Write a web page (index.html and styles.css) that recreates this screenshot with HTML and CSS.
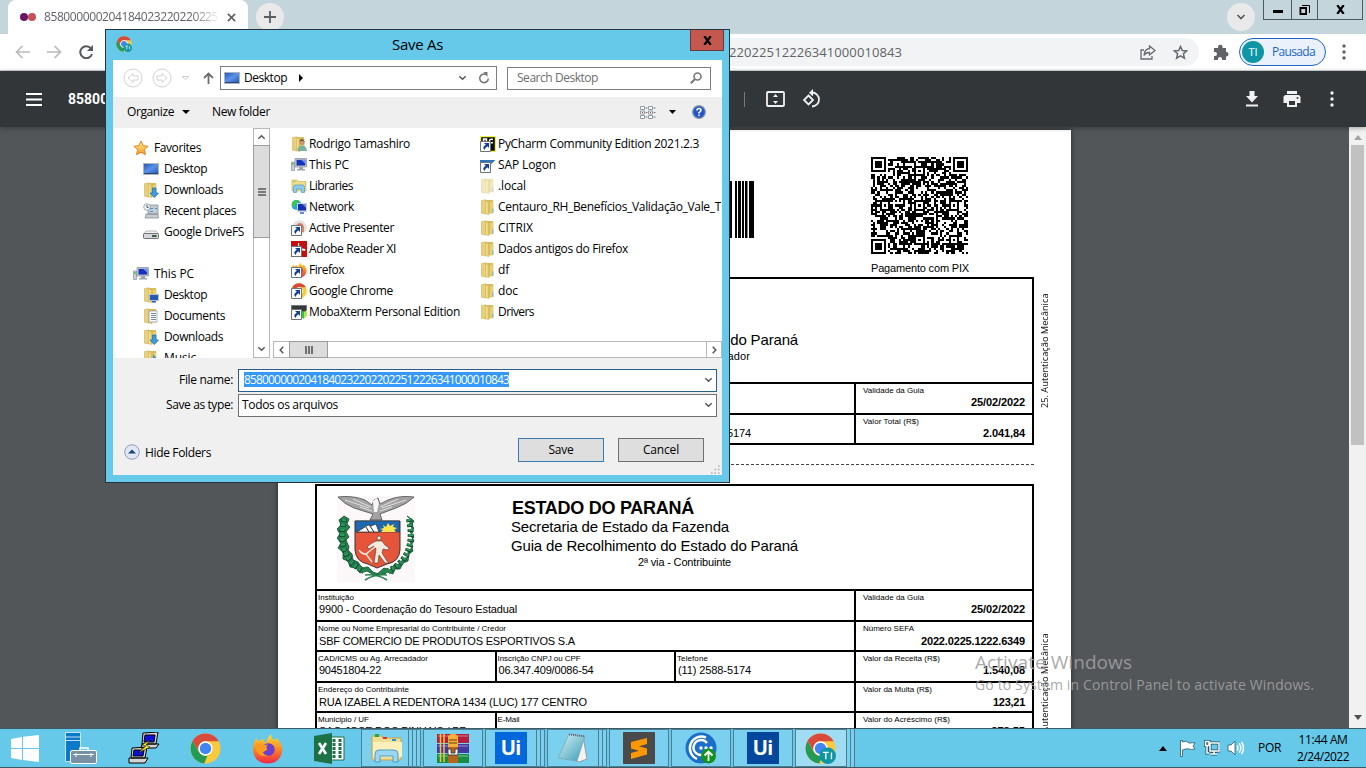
FILE: index.html
```html
<!DOCTYPE html>
<html lang="en">
<head>
<meta charset="utf-8">
<title>Save As</title>
<link rel="stylesheet" href="styles.css">
</head>
<body>
<svg class="defs" aria-hidden="true">
  <defs>
    <linearGradient id="gBlue" x1="0" y1="0" x2="1" y2="1"><stop offset="0" stop-color="#2558b4"/><stop offset=".5" stop-color="#5c93e8"/><stop offset="1" stop-color="#2a5cb8"/></linearGradient>
    <linearGradient id="gFold" x1="0" x2="1"><stop offset="0" stop-color="#f4e4a0"/><stop offset=".5" stop-color="#e2c662"/><stop offset="1" stop-color="#f2dc8a"/></linearGradient>
    <linearGradient id="gStar" x1="0" y1="0" x2="0" y2="1"><stop offset="0" stop-color="#fff0a0"/><stop offset="1" stop-color="#f79a1e"/></linearGradient>
    <linearGradient id="gFire" x1="0" y1="0" x2="0" y2="1"><stop offset="0" stop-color="#ffe03a"/><stop offset=".5" stop-color="#ff8a1e"/><stop offset="1" stop-color="#f0264f"/></linearGradient>
    <linearGradient id="gPad" x1="0" y1="0" x2="1" y2="1"><stop offset="0" stop-color="#d8f4f6"/><stop offset="1" stop-color="#3a9cb8"/></linearGradient>
    <symbol id="screen" viewBox="0 0 16 14"><path fill="#aab7c4" d="M0 1h16v12H0z"/><path fill="url(#gBlue)" d="M1 2h14v9H1z"/><path fill="#27436e" d="M1 11h14v1H1z"/></symbol>
    <symbol id="folder" viewBox="0 0 16 16"><path fill="#e9d07c" stroke="#cdb05a" stroke-width=".6" d="M1.500 1.500 6 .8V15l-4.500-.8z"/><path fill="#d9bd5c" d="M6 1h7v12H6z"/><path fill="url(#gFold)" stroke="#cfb355" stroke-width=".6" d="M5.500 2.500 9 2v13.500l-3.500-.8zM9 2.500h4V14H9z"/><path fill="#5fb2e6" d="M12.300 9.500h1v4h-1z"/></symbol>
    <symbol id="dl" viewBox="0 0 16 16"><use href="#folder"/><path fill="#39a0e0" stroke="#1b6fb0" stroke-width=".7" d="M9.500 6h3.500v5h2.500l-4.200 4.600L7 11h2.500z"/></symbol>
    <symbol id="deskf" viewBox="0 0 16 16"><use href="#folder"/><path fill="#b7c2cc" d="M6 7h10v7H6z"/><path fill="#245bb8" d="M7 8h8v5H7zM9 14h4v1.500H9z"/></symbol>
    <symbol id="docs" viewBox="0 0 16 16"><use href="#folder"/><path fill="#fff" stroke="#8a949e" stroke-width=".7" d="M6 3h8v11H6z"/><path stroke="#6d86a8" d="M8 5.500h5M8 7.500h5M8 9.500h5M8 11.500h5"/></symbol>
    <symbol id="music" viewBox="0 0 16 16"><use href="#folder"/><path fill="#3b93d4" d="M10 4l4 5v3l-3-4v6a2 2 0 1 1-1-2z"/></symbol>
    <symbol id="star" viewBox="0 0 16 16"><path fill="url(#gStar)" stroke="#df8420" d="M8 1l2.100 4.700 5 .5-3.700 3.500 1 5L8 12.200l-4.400 2.500 1-5L.9 6.200l5-.5z"/></symbol>
    <symbol id="recent" viewBox="0 0 16 16"><path fill="#c4ccd2" stroke="#87919a" stroke-width=".8" d="M5 2h10v9H5zM3 11h12l.5 4H2z"/><path stroke="#4f8dc4" d="M7 5.500h3M7 8.500h3M12 5.500h2"/><circle cx="4" cy="4" r="3.300" fill="#eef4f8" stroke="#8b99a4" stroke-width=".8"/><path d="M4 2v2.500h1.500" fill="none" stroke="#456"/></symbol>
    <symbol id="drive" viewBox="0 0 16 16"><path fill="#f1f3f4" stroke="#9aa0a5" stroke-width=".7" d="M3 7h10l2.500 3H.5z"/><rect x=".5" y="9.500" width="15" height="5" rx="1" fill="#d3d7d9" stroke="#6d7377"/><path fill="#4a4f52" d="M9 11h4v2H9z"/><path fill="#37c43b" d="M13 11h1v2h-1z"/></symbol>
    <symbol id="pc" viewBox="0 0 16 16"><path fill="#c9ced2" stroke="#7d858b" stroke-width=".6" d="M.5 5h3v8.500h-3z"/><path fill="#3dc843" d="M1 6h1.500v2H1z"/><path fill="#cdd3d8" stroke="#858c93" stroke-width=".7" d="M4 1.500h11.500v8.500H4z"/><path fill="#1732b8" d="M5.500 2.800h8.800v5.800H5.500z"/><path fill="#7090f0" d="M10 2.800h4.300v4z"/><path fill="#9ca4aa" d="M8 10h4v2h2v1.500H6V12h2z"/></symbol>
    <symbol id="user" viewBox="0 0 16 16"><use href="#folder"/><circle cx="11" cy="6.300" r="2.700" fill="#c8956a"/><path fill="#54402d" d="M8.300 5.500q2.700-5 5.300 0l-2.500-1z"/><path fill="#7bb29a" d="M6.500 15q0-5.500 4.500-5.500t5 5.500z"/></symbol>
    <symbol id="libs" viewBox="0 0 16 16"><path fill="#f1dc8c" stroke="#cfb252" stroke-width=".7" d="M1 2h5l1 1.500h8V13H1z"/><path fill="#8ed86b" d="M2 3h3v1H2z"/><path fill="#8bcdf0" stroke="#4d9bc9" stroke-width=".7" d="M2.500 14.500V9q0-2 2-2h7q2 0 2 2v5.500h-3V11h-5v3.500z"/></symbol>
    <symbol id="net" viewBox="0 0 16 16"><circle cx="5.500" cy="6" r="5" fill="#2aa6e0"/><path fill="#3cc84a" d="M2 2q4-2 6 0L5 5 2 9q-2-4 0-7z"/><path fill="#cdd4e0" d="M6 4h10v9H6z"/><path fill="#1230b0" d="M7 5h8v6.500H7z"/><path fill="#6f86e0" d="M11 5h4v4zM9 13h4v2H9z"/></symbol>
    <symbol id="cut" viewBox="0 0 16 16"><path fill="#fff" stroke="#6b737b" d="M.5 5.500h10v10H.5z"/><path fill="#143f96" d="M4 7h5v5L7.300 10.300Q5 12 4.500 14 1.500 11 5.800 8.800z"/></symbol>
    <symbol id="chrome" viewBox="0 0 32 32"><circle cx="16" cy="16" r="15.500" fill="#fbc93c"/><path fill="#d9493c" d="M2.600 8.300A15.500 15.500 0 0 1 29.600 8.500H16A7.500 7.500 0 0 0 9 13.500L8.500 18z"/><path fill="#249a57" d="M2.600 8.300 9.500 20q3 4.500 8.500 3.300L14.700 31.400A15.500 15.500 0 0 1 2.600 8.300z"/><circle cx="16" cy="16" r="7.400" fill="#fff"/><circle cx="16" cy="16" r="5.900" fill="#4285f4"/></symbol>
    <symbol id="ti" viewBox="0 0 32 32"><use href="#chrome"/><circle cx="23.500" cy="23.500" r="8.500" fill="#0e96a5"/><path fill="none" stroke="#fff" stroke-width="1.400" d="M18.500 20h6M21.500 20v7M27.300 20v7"/></symbol>
    <symbol id="firefox" viewBox="0 0 32 32"><path fill="url(#gFire)" d="M20 1q-1 4 2.500 6.500 2.500-.8 2.500-2.500Q32 12 31 19 29 31 16 31.500 2.500 31 1 18 .5 11 4.500 5q.5 2.500 2.500 3.500 2.500-2.500 5-2 0 3 3 4.500Q15 4 20 1z"/><circle cx="17" cy="17" r="6.500" fill="#6b3fd0"/><path fill="#ff9c20" d="M4.500 9q5 5.500 12 2.500-3 3-.5 5.500l-5 3q2 3.500 6 3-9 3-12.500-5z"/></symbol>
    <symbol id="ap" viewBox="0 0 16 16"><circle cx="8.500" cy="7.500" r="7.200" fill="#e3e2e0"/><path fill="none" stroke="#df785c" stroke-width="1.800" d="M5 12q0-8 4-8t3 8"/><use href="#cut"/></symbol>
    <symbol id="adobe" viewBox="0 0 16 16"><path fill="#c40e10" d="M0 0h16v16H0z"/><path fill="none" stroke="#fff" stroke-width="1.200" d="M8 2q-1.500 2 1 5t5 2q-1-2-7 0"/><use href="#cut"/></symbol>
    <symbol id="ffs" viewBox="0 0 16 16"><use href="#firefox"/><use href="#cut"/></symbol>
    <symbol id="chs" viewBox="0 0 16 16"><use href="#chrome"/><use href="#cut"/></symbol>
    <symbol id="moba" viewBox="0 0 16 16"><path fill="#35393c" stroke="#777" d="M.5 1.500h15v9H.5z"/><path fill="#2fca32" d="M11 7l4 1-2 7-3-2z"/><path fill="#b8e060" d="M13 8l3-2v6l-3 2z"/><use href="#cut"/></symbol>
    <symbol id="pyc" viewBox="0 0 16 16"><path fill="#0b0b0b" stroke="#eaf04c" stroke-width="1.200" d="M.6.600h14.800v14.800H.6z"/><path fill="none" stroke="#fff" stroke-width="1.500" d="M3.500 8V3h3v2.500h-3M13 3.500q-3.500-1-3.500 1.500T13 6.500"/><use href="#cut"/></symbol>
    <symbol id="sap" viewBox="0 0 16 16"><path fill="#2f75b8" d="M0 3h15.500L7 11H0z"/><use href="#cut"/></symbol>
    <symbol id="down" viewBox="0 0 10 6"><path fill="none" stroke="#555" stroke-width="1.600" d="M1.500 1 5 4.500 8.500 1"/></symbol>
    <symbol id="dots" viewBox="0 0 4 16"><circle cx="2" cy="2" r="1.700"/><circle cx="2" cy="8" r="1.700"/><circle cx="2" cy="14" r="1.700"/></symbol>
  </defs>
</svg>

<div class="desktop">
  <section class="browser">
    <div class="tabstrip">
      <div class="tab">
        <svg class="fav" viewBox="0 0 16 8"><circle cx="4" cy="4" r="4" fill="#6c1560"/><circle cx="12" cy="4" r="4" fill="#c94f58"/></svg>
        <span class="tab-title"><span data-w="174">8580000002041840232202202 25</span></span>
        <svg class="tab-x" viewBox="0 0 10 10"><path d="M1 1l8 8M9 1 1 9" stroke="#5a5e62" stroke-width="1.700"/></svg>
      </div>
      <div class="round plus"><svg width="12" height="12"><path d="M6 0v12M0 6h12" stroke="#5a5e62" stroke-width="1.800"/></svg></div>
      <div class="round chev"><svg width="10" height="6"><use href="#down"/></svg></div>
      <div class="winbtns">
        <span><svg width="10" height="3"><path d="M0 0h10v3H0z"/></svg></span>
        <span><svg width="11" height="10" viewBox="0 0 11 10"><path fill="none" stroke="#000" d="M3 .5h7.500V8"/><path fill="none" stroke="#000" stroke-width="1.800" d="M1.400 3h5.700v6H1.400z"/></svg></span>
        <span><svg width="9" height="9" viewBox="0 0 9 9"><path d="M1.300 0 7.700 9M7.700 0 1.300 9" stroke="#000" stroke-width="2.200"/></svg></span>
      </div>
    </div>
    <div class="navbar">
      <svg class="nav" width="15" height="14" viewBox="0 0 15 14"><path fill="none" stroke="#b9bbbd" stroke-width="1.700" d="M15 7H1.500M7.500 1 1.500 7l6 6"/></svg>
      <svg class="nav" width="15" height="14" viewBox="0 0 15 14"><path fill="none" stroke="#b9bbbd" stroke-width="1.700" d="M0 7h13.500M7.500 1l6 6-6 6"/></svg>
      <svg class="nav" width="15" height="14" viewBox="0 0 15 14"><path fill="none" stroke="#55595d" stroke-width="2" d="M12 3.500A6 6 0 1 0 13 9"/><path fill="#55595d" d="M14 0v6H8z"/></svg>
      <div class="urlbar">
        <span class="url" data-w="173">220225122263410000 10843</span>
        <svg class="share" width="16" height="15" viewBox="0 0 16 15"><path fill="none" stroke="#65696d" stroke-width="1.300" d="M4 5H1v9h11v-3M9.500 1 15 5.500 9.500 10V7.500Q5.500 7.500 4 10.500 4.500 4 9.500 3.500z"/></svg>
        <svg width="15" height="15" viewBox="0 0 15 15"><path fill="none" stroke="#65696d" stroke-width="1.500" d="M7.500 1.500l1.800 4 4.400.4-3.300 2.900 1 4.300-3.900-2.300-3.900 2.300 1-4.300L1.300 5.900l4.400-.4z"/></svg>
      </div>
      <svg class="puzzle" width="16" height="16" viewBox="0 0 16 16"><path fill="#5f6368" d="M1 4h4V3a2.300 2.300 0 0 1 4.600 0v1H13v4h.7a2.300 2.300 0 0 1 0 4.500H13V16H9v-1a2 2 0 0 0-4 0v1H1v-4h1a2 2 0 0 0 0-4H1z"/></svg>
      <div class="pill"><b>TI</b><span data-w="43">Pausada</span></div>
      <svg class="more" width="4" height="16" fill="#5f6368"><use href="#dots"/></svg>
    </div>
    <div class="pdfbar">
      <svg class="burger" width="16" height="13"><path d="M0 1h16M0 6.500h16M0 12h16" stroke="#fff" stroke-width="2"/></svg>
      <strong class="pdf-title">858000000204</strong>
      <i class="sep"></i>
      <svg class="fit" width="19" height="16" viewBox="0 0 19 16"><rect x="1" y="1" width="17" height="14" rx="1" fill="none" stroke="#f1f1f1" stroke-width="1.800"/><path fill="#f1f1f1" d="M9.500 3l2.500 3H7zM9.500 13 7 10h5z"/></svg>
      <svg class="rot" width="19" height="20" viewBox="0 0 19 20"><path fill="none" stroke="#f1f1f1" stroke-width="1.800" d="M6.500 6.500 11 11l-4.500 4.500L2 11zM10 3.500a7 7 0 0 1 0 14"/><path fill="#f1f1f1" d="M11 0v7.500L7 3.700z"/></svg>
      <span class="grow"></span>
      <svg width="14" height="16" viewBox="0 0 14 16"><path fill="#f1f1f1" d="M4.500 0h5v5H13l-6 6.500L1 5h3.500zM1 13.500h12v2H1z"/></svg>
      <svg class="print" width="18" height="16" viewBox="0 0 18 16"><path fill="#f1f1f1" fill-rule="evenodd" d="M4 0h10v3H4zM3 4h12q2.500 0 2.500 2.500V12H14v4H4v-4H.5V6.500Q.5 4 3 4zm3 6v4h6v-4z"/><circle cx="14.500" cy="7" r="1" fill="#323639"/></svg>
      <svg width="4" height="16" fill="#f1f1f1"><use href="#dots"/></svg>
    </div>
    <div class="viewer">
      <div class="canvas">
        <article class="page">
          <div class="codes">
            <svg class="bars" width="26" height="57"><path d="M0 0h4v57H0zM7 0h2v57H7zM10 0h3v57h-3zM14 0h2v57h-2zM17 0h2.500v57H17zM21 0h5v57h-5z"/></svg>
            <div class="pix"><svg id="qr" width="97" height="97" viewBox="0 0 45 45" shape-rendering="crispEdges"><path/></svg><span data-w="98">Pagamento com PIX</span></div>
          </div>
          <div class="slip">
            <div class="form first">
              <div class="head"><div class="crest"></div><div class="headings"><h1 data-w="182">ESTADO DO PARANÁ</h1><p data-w="218">Secretaria de Estado da Fazenda</p><p data-w="287">Guia de Recolhimento do Estado do Paraná</p><small data-w="100">1ª via - Arrecadador</small></div></div>
              <div class="row"><div class="cell wide"></div><div class="cell right"><label data-w="61">Validade da Guia</label><b data-w="54">25/02/2022</b></div></div>
              <div class="row"><div class="cell"></div><div class="cell"></div><div class="cell"><label>Telefone</label><em data-w="73">(11) 2588-5174</em></div><div class="cell right"><label data-w="56">Valor Total (R$)</label><b data-w="42">2.041,84</b></div></div>
            </div>
            <div class="side">25. Autenticação Mecânica</div>
          </div>
          <div class="cutline"></div>
          <div class="slip">
            <div class="form">
              <div class="head">
                <svg class="crest" width="78" height="86" viewBox="0 0 78 86">
                  <path fill="#fcf8f9" d="M0 0h78v86H0z"/>
                  <g fill="#278552" stroke="#114829" stroke-width=".8"><path d="M7 20l5 3-2 5 3 3-4 5 3 5-3 3 3 7-1 3 4 4 1 6 5 2 4 6 6-1 5 5 5 2-4 1-7-4-7 2-4-5-6-1-2-6-5-2 0-7-5-4 3-5-4-5 3-4-3-5 4-4-2-5z"/><path d="M70 20l5 4-3 4 5 4-4 4 4 5-4 5 3 5-5 4v6l-5 2-3 5-6 1-4 5-6-2-8 7 9-1 2-2 6 2 2-5 5 0 3-6 5-2 1-7 4-3-2-6 3-4-3-5 2-5-2-5 3-5z"/></g>
                  <path fill="none" stroke="#114829" stroke-dasharray="3 2" stroke-width="6" d="M7 23Q-1 62 27 75M72 23Q80 62 51 75"/>
                  <path fill="none" stroke="#2b9a5f" stroke-dasharray="2 3" stroke-width="4.500" d="M7 23Q-1 62 27 75M72 23Q80 62 51 75"/>
                  <path fill="none" stroke="#278552" stroke-width="1.500" d="M28 79q12-1 22 5M50 79q-12-1-22 5"/>
                  <path fill="#a3a3a3" stroke="#4c4c4c" stroke-width=".8" d="M1 1q14-2 27 3l7 5 2-5 4-2 2 6 8-4Q63-1 77 1q-7 7-18 11L43 18l2 6H33l3-6L17 12Q7 8 1 1z"/>
                  <path fill="none" stroke="#dedede" d="M8 4l24 8M16 3l18 8M69 4l-24 8M61 3l-18 8M23 11l12 4M55 11l-12 4"/>
                  <path fill="#f7f7f7" d="M36 5l4-3 2 5-2 9h-3z"/>
                  <path fill="#e6553a" stroke="#373737" d="M18 25h45v29q-1 12-13 14l-10 4-9-4Q19 66 18 54z"/>
                  <path fill="#1c69b0" stroke="#333" stroke-width=".6" d="M18.500 25h44v11h-44z"/>
                  <path fill="#fff" stroke="#222" stroke-width=".7" d="M20 36l11-7 3 1 5-2 3 8z"/><path stroke="#222" d="M29 31l3 5M33 30l4 6"/>
                  <path fill="#ffe54d" d="M44 36l2-2-3-1 4-1-1-3 3 2 2-4 2 3 4-2-1 3 4 1-3 2 2 2z"/>
                  <circle cx="42" cy="42" r="2" fill="#f5e8dc" stroke="#4a372c" stroke-width=".6"/>
                  <path fill="#f5e8dc" stroke="#4a372c" stroke-width=".6" d="M39 45h6l3 4 4 3-1 2-5-1-1 4 5 8 2 2h-4l-6-8-1 8h-4l2-14-2-3-5 3-2-2 5-4z"/><path fill="none" stroke="#f7f0e8" stroke-width="1.300" d="M44 46 29 58q-5-1-7-4 3 5 7 4l6 8"/>
                </svg>
                <div class="headings"><h1 data-w="182">ESTADO DO PARANÁ</h1><p data-w="218">Secretaria de Estado da Fazenda</p><p data-w="287">Guia de Recolhimento do Estado do Paraná</p><small data-w="93">2ª via - Contribuinte</small></div>
              </div>
              <div class="row"><div class="cell wide"><label data-w="36">Instituição</label><em data-w="198">9900 - Coordenação do Tesouro Estadual</em></div><div class="cell right"><label data-w="61">Validade da Guia</label><b data-w="54">25/02/2022</b></div></div>
              <div class="row tall"><div class="cell wide"><label data-w="188">Nome ou Nome Empresarial do Contribuinte / Credor</label><em data-w="256">SBF COMERCIO DE PRODUTOS ESPORTIVOS S.A</em></div><div class="cell right"><label data-w="51">Número SEFA</label><b data-w="104">2022.0225.1222.6349</b></div></div>
              <div class="row"><div class="cell"><label data-w="110">CAD/ICMS ou Ag. Arrecadador</label><em data-w="62">90451804-22</em></div><div class="cell"><label data-w="83">Inscrição CNPJ ou CPF</label><em data-w="95">06.347.409/0086-54</em></div><div class="cell"><label data-w="31">Telefone</label><em data-w="73">(11) 2588-5174</em></div><div class="cell right"><label data-w="77">Valor da Receita (R$)</label><b data-w="42">1.540,08</b></div></div>
              <div class="row tall"><div class="cell wide"><label data-w="91">Endereço do Contribuinte</label><em data-w="268">RUA IZABEL A REDENTORA 1434 (LUC) 177 CENTRO</em></div><div class="cell right"><label data-w="69">Valor da Multa (R$)</label><b data-w="32">123,21</b></div></div>
              <div class="row"><div class="cell"><label data-w="51">Municipio / UF</label><em data-w="148">SAO JOSE DOS PINHAIS / PR</em></div><div class="cell mail"><label data-w="22">E-Mail</label></div><div class="cell right"><label data-w="87">Valor do Acréscimo (R$)</label><b>378,55</b></div></div>
            </div>
            <div class="side second">25. Autenticação Mecânica</div>
          </div>
        </article>
      </div>
      <div class="scroll"><i class="tri up"></i><i class="thumb"></i><i class="tri dn"></i></div>
    </div>
  </section>

  <footer class="taskbar">
    <svg class="ic start" width="28" height="27" viewBox="0 0 28 27"><path fill="#fff" d="M0 4l11-2v11H0zM12 1.800 28 0v13H12zM0 14h11v11L0 23zM12 14h16v13l-16-2z"/></svg>
    <svg class="ic srv" width="32" height="32" viewBox="0 0 32 32"><path fill="#0b78c8" stroke="#e8f6fc" stroke-width=".8" d="M.5.500h15v29H.5zM.5 8.500h15M.5 5h15"/><path fill="none" stroke="#fff" stroke-width="1.500" d="M15 18v-2h8v2"/><rect x="5.500" y="18.500" width="26" height="13" rx="1.500" fill="#7890a4" stroke="#fff"/><path stroke="#fff" d="M8 22.500h21M11 21v4M26 21v4"/></svg>
    <svg class="ic putty" width="32" height="32" viewBox="0 0 32 32"><g stroke="#000"><path fill="#d3d3d3" d="M14 12h17l-3 4H13zM15 1l15-1-2 12H14zM1 26h19l-3 5H1zM4 16l15-1-2 11H3z"/><path fill="#0d12d8" d="M17 3h10l-1 7H16zM6 18h10l-1 6H5z"/><path fill="#fff11c" stroke-width=".5" d="M22 8l-8 5 4 1-8 7 12-6-4-2z"/></g></svg>
    <svg class="ic c1" width="31" height="31"><use href="#chrome"/></svg>
    <svg class="ic c2" width="31" height="31"><use href="#firefox"/></svg>
    <svg class="ic c3" width="31" height="31" viewBox="0 0 31 31"><path fill="#fff" stroke="#1c7145" d="M17 4h13v23H17z"/><path stroke="#1c7145" stroke-width="3" stroke-dasharray="3 1" d="M20 6v19M26 6v19"/><path fill="#1c7145" d="M0 3l18-3v31L0 28z"/><path stroke="#fff" stroke-width="2.600" d="M5 10l7 11M12 10 5 21"/></svg>
    <div class="task stack first-task"><svg width="32" height="30" viewBox="0 0 32 30"><path fill="#f0dd96" stroke="#c4a44e" d="M1 3h10l1 2h18v22H1z"/><path fill="#20ad3e" d="M4 1h4v3H4z"/><path fill="#d63b22" d="M12 4h4v2h-4z"/><path fill="#2693dc" d="M21 6h4v2h-4z"/><path fill="#fbf0ba" d="M2 9h29v15H2z"/><path fill="#9bd6f2" stroke="#4c9dca" d="M4 29V21q0-4 4-4h15q4 0 4 4v8h-5v-6H9v6z"/></svg><i></i><i></i><i></i></div>
    <div class="task"><svg width="32" height="30" viewBox="0 0 32 30"><path fill="#b21e3c" d="M0 1h32v9H0z"/><path fill="#4636a4" d="M0 11h32v9H0z"/><path fill="#188c43" d="M0 21h32v9H0z"/><path stroke="#fff" opacity=".45" d="M1 3h30M1 13h30M1 23h30"/><path stroke="#f1c43b" stroke-width="1.500" d="M3.500 1v28M7 1v28"/><path fill="#b4641c" d="M11 3h10v27H11z"/><path fill="#f2af3a" d="M11 3q5-5 10 0v11H11z"/><path stroke="#6b3a10" d="M12 7h8M12 10h8"/><path fill="#fff" stroke="#444" d="M11 16h3v4h4v-4h3v6H11z"/></svg></div>
    <div class="task stack"><span class="ui">Ui</span><i></i><i></i></div>
    <div class="task stack"><svg width="32" height="30" viewBox="0 0 32 30"><path fill="#f3f4ef" stroke="#99a" d="M26 3l4 23-8 3-4-2z"/><path fill="url(#gPad)" stroke="#7aa0ac" stroke-width=".7" d="M12 1l16 2-8 25L1 25z"/><path stroke="#667" stroke-width="2" stroke-dasharray="1 1" d="M12 1.500l16 2"/></svg><i></i><i></i></div>
    <div class="task"><svg width="32" height="32" viewBox="0 0 32 32"><rect width="32" height="32" rx="1" fill="#4a4a4a"/><path fill="#ff9800" d="M8 10l16-4v6l-8 2.300 8 2.200v6L8 27v-6l8-2.300-8-2.200z"/></svg></div>
    <div class="task"><svg width="32" height="32" viewBox="0 0 32 32"><circle cx="16" cy="16" r="15.500" fill="#1c6fc8"/><g fill="none" stroke="#fff" stroke-width="2.400"><path d="M21 5.500A11.500 11.500 0 1 0 12 27M22 11a7.500 7.500 0 1 0-5 12"/></g><g fill="#fff"><circle cx="16" cy="16" r="1.700"/><circle cx="21" cy="16" r="1.700"/><circle cx="26" cy="16" r="1.700"/></g><circle cx="23.500" cy="24" r="7.500" fill="#12941a"/><path fill="none" stroke="#fff" stroke-width="1.800" d="M23.500 29v-9M19.500 23.500l4-4 4 4"/></svg></div>
    <div class="task"><span class="ui dark">Ui</span></div>
    <div class="task stack active"><svg width="31" height="31"><use href="#ti"/></svg><i></i><i></i></div>
    <div class="tray">
      <svg width="8" height="5"><path d="M4 0l4 5H0z"/></svg>
      <svg class="flag" width="16" height="17" viewBox="0 0 16 17"><path fill="#fff" stroke="#2b5668" stroke-width=".8" d="M.5.500h2V2q3-1.500 5 0t3 1 4.500 0l-2 3 2 3q-4 1-6 0T2.500 10v6.500h-2z"/></svg>
      <svg class="lan" width="16" height="16" viewBox="0 0 16 16"><path fill="none" stroke="#245065" stroke-width="3" d="M6 3h9v8H6zM7 14h6M10 11v3M1.500 1.500h3.500v4H1.500zM3 5v8h2"/><path fill="none" stroke="#fff" stroke-width="1.500" d="M6 3h9v8H6zM7 14h6M10 11v3M1.500 1.500h3.500v4H1.500zM3 5v8h2"/></svg>
      <svg class="vol" width="17" height="16" viewBox="0 0 17 16"><path fill="#fff" stroke="#2b5668" stroke-width=".8" d="M1 5h3l4-4v14l-4-4H1z"/><path fill="none" stroke="#fff" stroke-width="1.400" d="M10 5.500q2 2.500 0 5M12 3.500q4 4.500 0 9M14.500 2q4 6 0 12"/></svg>
      <span class="lang" data-w="23">POR</span>
      <div class="clock"><span data-w="49">11:44 AM</span><span data-w="52">2/24/2022</span></div>
    </div>
  </footer>

  <div class="watermark"><span data-w="157">Activate Windows</span><small data-w="339">Go to System in Control Panel to activate Windows.</small></div>

  <section class="dialog">
    <div class="titlebar"><svg width="16" height="16"><use href="#ti"/></svg><span class="dlg-title"><span data-w="51">Save As</span></span><div class="close"><svg width="9" height="9" viewBox="0 0 9 9"><path d="M1.300 0 7.700 9M7.700 0 1.300 9" stroke="#000" stroke-width="2.200"/></svg></div></div>
    <div class="body">
      <div class="addr">
        <svg width="20" height="20" viewBox="0 0 20 20" fill="none" stroke="#d2d2d2"><circle cx="10" cy="10" r="9"/><path d="M5 10l5-4.500V8h5v4h-5v2.500z"/></svg>
        <svg class="fwd" width="20" height="20" viewBox="0 0 20 20" fill="none" stroke="#d2d2d2"><circle cx="10" cy="10" r="9"/><path d="M15 10l-5-4.500V8H5v4h5v2.500z"/></svg>
        <svg class="mini" width="7" height="4"><path d="M.5.500h6l-3 3z" fill="none" stroke="#ccc"/></svg>
        <svg class="uparrow" width="11" height="12" viewBox="0 0 11 12"><path fill="none" stroke="#6d6d6d" stroke-width="1.800" d="M5.500 12V1.500M1 6l4.500-4.500L10 6"/></svg>
        <div class="path"><svg width="16" height="14"><use href="#screen"/></svg><span data-w="43">Desktop</span><svg class="crumb" width="4" height="8"><path d="M0 0l4 4-4 4z"/></svg><span class="grow"></span><svg width="9" height="6"><use href="#down"/></svg><svg class="refresh" width="12" height="12" viewBox="0 0 12 12"><path fill="none" stroke="#777" stroke-width="1.600" d="M8.500 2.800A4.300 4.300 0 1 0 10.300 6.500"/><path fill="#777" d="M5.500 0h4v5z"/></svg></div>
        <div class="search"><span data-w="81">Search Desktop</span><svg width="12" height="12" viewBox="0 0 12 12"><circle cx="7.500" cy="4.500" r="3.500" fill="none" stroke="#777" stroke-width="1.600"/><path d="M5 7 .8 11.200" stroke="#777" stroke-width="2"/></svg></div>
      </div>
      <div class="tools"><span data-w="47">Organize</span><svg class="t1" width="8" height="4"><path d="M0 0h8L4 4z"/></svg><span data-w="58">New folder</span><span class="grow"></span>
        <svg width="16" height="13" viewBox="0 0 16 13"><path fill="#fff" stroke="#8e9aa6" d="M.5.500h4v3h-4zM.5 5h4v3h-4zM.5 9.500h4v3h-4zM8.500.500h4v3h-4zM8.500 5h4v3h-4zM8.500 9.500h4v3h-4z"/><path stroke="#777" d="M5.500 2h2M5.500 6.500h2M5.500 11h2M13.500 2h2M13.500 6.500h2M13.500 11h2"/><path fill="#d32" d="M2 6h1v1H2zM10 6h1v1h-1z"/></svg>
        <svg class="t2" width="7" height="4"><path d="M0 0h7L3.500 4z"/></svg>
        <svg class="help" width="14" height="14" viewBox="0 0 14 14"><circle cx="7" cy="7" r="6.300" fill="#2455cc" stroke="#8a93a5" stroke-width="1.200"/><path fill="none" stroke="#fff" stroke-width="1.600" d="M5 5.400Q5 3.500 7 3.500t2 1.700Q9 6.400 7 7.600v1M7 9.600v1.500"/></svg>
      </div>
      <div class="files">
        <nav class="tree">
          <div class="top"><svg><use href="#star"/></svg><span data-w="47">Favorites</span></div>
          <div><svg><use href="#screen"/></svg><span data-w="43">Desktop</span></div>
          <div><svg><use href="#dl"/></svg><span data-w="59">Downloads</span></div>
          <div><svg><use href="#recent"/></svg><span data-w="72">Recent places</span></div>
          <div><svg><use href="#drive"/></svg><span data-w="80">Google DriveFS</span></div>
          <div></div>
          <div class="top"><svg><use href="#pc"/></svg><span data-w="40">This PC</span></div>
          <div><svg><use href="#deskf"/></svg><span data-w="43">Desktop</span></div>
          <div><svg><use href="#docs"/></svg><span data-w="61">Documents</span></div>
          <div><svg><use href="#dl"/></svg><span data-w="59">Downloads</span></div>
          <div><svg><use href="#music"/></svg><span data-w="32">Music</span></div>
        </nav>
        <div class="vscroll"><span class="btn"><svg class="flip" width="9" height="6"><use href="#down"/></svg></span><span class="vthumb"><svg width="8" height="8"><path d="M0 1h8M0 4h8M0 7h8" stroke="#555" stroke-width="1.600"/></svg></span><span class="grow"></span><span class="btn"><svg width="9" height="6"><use href="#down"/></svg></span></div>
        <div class="list">
          <div class="cols">
            <ul>
              <li><svg><use href="#user"/></svg><span data-w="101">Rodrigo Tamashiro</span></li>
              <li><svg><use href="#pc"/></svg><span data-w="40">This PC</span></li>
              <li><svg><use href="#libs"/></svg><span data-w="44">Libraries</span></li>
              <li><svg><use href="#net"/></svg><span data-w="45">Network</span></li>
              <li><svg><use href="#ap"/></svg><span data-w="85">Active Presenter</span></li>
              <li><svg><use href="#adobe"/></svg><span data-w="87">Adobe Reader XI</span></li>
              <li><svg><use href="#ffs"/></svg><span data-w="35">Firefox</span></li>
              <li><svg><use href="#chs"/></svg><span data-w="84">Google Chrome</span></li>
              <li><svg><use href="#moba"/></svg><span data-w="151">MobaXterm Personal Edition</span></li>
            </ul>
            <ul>
              <li><svg><use href="#pyc"/></svg><span data-w="201">PyCharm Community Edition 2021.2.3</span></li>
              <li><svg><use href="#sap"/></svg><span data-w="58">SAP Logon</span></li>
              <li><svg class="faded"><use href="#folder"/></svg><span data-w="28">.local</span></li>
              <li><svg><use href="#folder"/></svg><span data-w="223">Centauro_RH_Benefícios_Validação_Vale_T</span></li>
              <li><svg><use href="#folder"/></svg><span data-w="35">CITRIX</span></li>
              <li><svg><use href="#folder"/></svg><span data-w="130">Dados antigos do Firefox</span></li>
              <li><svg><use href="#folder"/></svg><span data-w="11">df</span></li>
              <li><svg><use href="#folder"/></svg><span data-w="20">doc</span></li>
              <li><svg><use href="#folder"/></svg><span data-w="36">Drivers</span></li>
            </ul>
          </div>
          <div class="hscroll"><span class="btn"><svg class="left" width="9" height="6"><use href="#down"/></svg></span><span class="hthumb"><svg width="8" height="8"><path d="M1 0v8M4 0v8M7 0v8" stroke="#555" stroke-width="1.600"/></svg></span><span class="grow"></span><span class="btn last"><svg class="rgt" width="9" height="6"><use href="#down"/></svg></span></div>
        </div>
      </div>
      <div class="bottom">
        <div class="field"><span class="lbl"><span data-w="54">File name:</span></span><div class="combo focus"><mark data-w="265">85800000020418402322022022512226341000010843</mark><svg width="9" height="6"><use href="#down"/></svg></div></div>
        <div class="field"><span class="lbl"><span data-w="67">Save as type:</span></span><div class="combo"><span data-w="96">Todos os arquivos</span><svg width="9" height="6"><use href="#down"/></svg></div></div>
        <div class="actions">
          <svg width="16" height="16" viewBox="0 0 16 16"><circle cx="8" cy="8" r="7.300" fill="#e2e8f2" stroke="#8d9cb8"/><path fill="#1c3f86" d="M8 5.500l4 4H4z"/></svg>
          <span data-w="66">Hide Folders</span><span class="grow"></span>
          <button class="save"><span data-w="25">Save</span></button><button><span data-w="36">Cancel</span></button>
        </div>
        <svg class="grip" width="9" height="9"><path stroke="#b0b0b0" stroke-width="1.600" stroke-dasharray="1.600 1.900" d="M0 8h9M3.500 4.500H9M7 1h2"/></svg>
      </div>
    </div>
  </section>
</div>
<script src="script.js"></script>
</body>
</html>
```

FILE: styles.css
```css
* { box-sizing: border-box; }
body { margin: 0; overflow: hidden; font: 12px/16px "Open Sans", "Noto Sans", sans-serif; color: #000; }
svg { display: block; flex: none; }
.defs { position: absolute; width: 0; height: 0; }
.grow { flex: 1; }
[data-w] { white-space: nowrap; }
.desktop { position: relative; width: 1366px; height: 768px; display: flex; flex-direction: column; overflow: hidden; }

/* browser chrome */
.browser { height: 728px; display: flex; flex-direction: column; }
.tabstrip { height: 34px; flex: none; background: #c4d6dc; display: flex; align-items: flex-start; padding-left: 8px; }
.tab { width: 240px; height: 34px; background: #fff; border-radius: 8px 8px 0 0; display: flex; align-items: center; padding: 0 11px 0 12px; }
.fav { width: 16px; height: 8px; }
.tab-title { width: 176px; margin-left: 8px; overflow: hidden; color: #5f6368; word-spacing: -3px; -webkit-mask-image: linear-gradient(90deg, #000 84%, transparent); mask-image: linear-gradient(90deg, #000 84%, transparent); }
.tab-x { width: 9px; height: 9px; margin-left: 7px; }
.round { width: 28px; height: 28px; border-radius: 50%; background: #e9e9e9; display: flex; align-items: center; justify-content: center; margin-top: 3px; }
.plus { margin-left: 8px; }
.chev { margin-left: auto; }
.winbtns { display: flex; height: 20px; width: 100px; margin: 0 3px 0 8px; border: 1px solid #4e5a60; border-top: 0; }
.winbtns span { width: 28px; display: flex; align-items: center; justify-content: center; border-right: 1px solid #4e5a60; }
.winbtns span:nth-child(2) { width: 26px; }
.winbtns span:last-child { flex: 1; border: 0; }
.winbtns span:first-child svg { margin-top: 4px; }
.navbar { height: 37px; flex: none; background: #fff; border-bottom: 1px solid #d5dade; display: flex; align-items: center; padding: 0 21px 0 15px; }
.nav { margin-right: 17px; }
.urlbar { height: 28px; flex: 1; margin-left: 2px; border-radius: 14px; background: #f1f3f4; display: flex; align-items: center; padding: 0 11px 0 616px; color: #5f6368; font-size: 13px; }
.url { word-spacing: -3.500px; }
.share { margin-left: auto; margin-right: 17px; }
.puzzle { margin: 0 10px 0 14px; }
.pill { width: 87px; height: 28px; border: 1px solid #1a66d0; border-radius: 14px; background: #eaf1fb; color: #1a66d0; display: flex; align-items: center; padding-left: 2px; }
.pill b { width: 22px; height: 22px; margin-right: 8px; border-radius: 50%; background: #0e96a5; color: #fff; font-weight: 400; line-height: 22px; text-align: center; font-size: 11px; }
.more { margin-left: 16px; margin-right: -1px; }
.pdfbar { height: 56px; flex: none; background: #323639; display: flex; align-items: center; padding: 0 32px 0 26px; position: relative; box-shadow: 0 1px 5px rgba(0,0,0,.35); z-index: 1; }
.pdf-title { width: 676px; margin-left: 26px; color: #fff; font: bold 14px/18px Roboto, sans-serif; }
.sep { width: 1px; height: 15px; background: #77797b; }
.fit { margin-left: 21px; }
.rot { margin-left: 17px; }
.print { margin: 0 29px 0 24px; }
.viewer { flex: 1; min-height: 0; display: flex; background: #525659; overflow: hidden; }
.canvas { flex: 1; display: flex; justify-content: center; padding-top: 3px; }
.page { width: 793px; height: 1122px; background: #fff; box-shadow: 0 0 5px rgba(0,0,0,.55); font-family: "Liberation Sans", Arial, sans-serif; }
.scroll { width: 17px; background: #f1f1f1; display: flex; flex-direction: column; align-items: center; padding: 8px 0; }
.tri { border: 4px solid transparent; }
.up { border-top: 0; border-bottom: 5px solid #a3a3a3; margin-bottom: 5px; }
.dn { border-bottom: 0; border-top: 5px solid #505050; margin-top: auto; }
.thumb { width: 13px; height: 300px; background: #c1c1c1; }

/* document */
.codes { height: 147px; display: flex; justify-content: flex-end; padding-right: 102px; }
.bars { margin: 51px 117px 0 0; }
.pix { width: 98px; padding-top: 27px; font-size: 11px; line-height: 14px; }
#qr { margin-bottom: 7px; }
.slip { display: flex; padding-left: 37px; }
.form { width: 719px; border: 2px solid #000; }
.head { height: 103px; display: flex; }
.crest { width: 78px; margin: 10px 0 0 20px; flex: none; }
.headings { width: 290px; margin-left: 96px; padding-top: 12px; display: flex; flex-direction: column; align-items: flex-start; }
.headings h1 { margin: 0 0 0 1px; font-size: 18px; line-height: 20px; }
.headings p { margin: 0; font-size: 15px; line-height: 18px; }
.headings p + p { margin-top: 1px; }
.headings small { font-size: 11px; line-height: 14px; margin-left: 127px; }
.first .headings { padding-top: 13px; }
.first small { margin-left: 139px; }
.row { height: 30.500px; border-top: 2px solid #000; display: flex; }
.cell { width: 179.500px; border-right: 2px solid #000; padding: 2px 0 0 1px; display: flex; flex-direction: column; align-items: flex-start; }
.cell.wide { width: 539px; }
.cell.mail { width: 359.500px; }
.cell:nth-child(3):not(.right) { width: 180px; }
.cell.right { flex: 1; border: 0; padding: 2px 7px 0 7px; }
.cell label { font-size: 8px; line-height: 9px; }
.cell em { font-style: normal; font-size: 11px; line-height: 14px; margin-left: 1px; }
.cell b { font-size: 11px; line-height: 14px; align-self: flex-end; }
.tall em, .tall b { margin-top: 1px; }
.side { writing-mode: vertical-rl; transform: rotate(180deg); height: 115px; margin: 16px 0 0 6px; font: 9.200px/10px "Noto Sans", sans-serif; color: #222; white-space: nowrap; }
.side.second { margin-top: 149px; }
.cutline { height: 39px; margin: 0 37px 0 38px; display: flex; align-items: center; }
.cutline::after { content: ""; flex: 1; height: 1px; background: repeating-linear-gradient(90deg, #444 0 3px, transparent 3px 5px); }

/* taskbar */
.taskbar { height: 40px; background: #66c9ea; border-top: 1px solid #3c5a66; border-bottom: 1px solid #3c5a66; display: flex; align-items: center; }
.start { margin-left: 11px; }
.srv { margin-left: 26px; }
.putty { margin-left: 31px; }
.c1 { margin-left: 30px; }
.c2 { margin-left: 31px; }
.c3 { margin-left: 31px; }
.task { width: 60px; height: 38px; margin-right: 2px; border: 1px solid #4c7f93; background: #7ad0ee; display: flex; align-items: center; padding-left: 13px; }
.stack { padding-left: 9px; justify-content: space-between; }
.stack i { width: 4px; height: 38px; border-left: 1px solid #4c7f93; margin-left: 0; }
.stack > :first-child { margin-right: auto; }
.first-task { margin-left: 16px; }
.active { background: #a0dcf2; }
.active i { background: #7ad0ee; }
.ui { width: 32px; height: 32px; background: #0468dc; color: #fff; font: bold 20px/32px Inter, sans-serif; text-align: center; }
.ui.dark { background: #04479c; }
.tray { margin-left: auto; display: flex; align-items: center; padding-right: 17px; }
.flag { margin-left: 13px; }
.lan { margin-left: 8px; }
.vol { margin-left: 7px; }
.lang { margin-left: 14px; }
.clock { width: 52px; margin-left: 16px; display: flex; flex-direction: column; align-items: center; }
.clock span { line-height: 17px; }

.watermark { position: absolute; left: 975px; top: 650px; z-index: 2; color: rgba(160,160,160,.9); display: flex; flex-direction: column; align-items: flex-start; }
.watermark span { font-size: 19px; line-height: 24px; }
.watermark small { font-size: 14px; line-height: 22px; }

/* dialog window */
.dialog { position: absolute; left: 105px; top: 29px; z-index: 3; width: 625px; height: 454px; border: 1px solid #23343c; background: #66c9ea; display: flex; flex-direction: column; padding: 0 7px 7px; }
.titlebar { height: 30px; display: flex; align-items: flex-start; padding-left: 3px; }
.titlebar > svg { margin-top: 6px; }
.dlg-title { flex: 1; text-align: center; font-size: 15px; line-height: 20px; padding: 4px 0 0 13px; }
.close { width: 34px; height: 21px; margin-right: -2px; background: #c4584f; border: 1px solid #6b3a38; border-top: 0; display: flex; align-items: center; justify-content: center; }
.body { flex: 1; display: flex; flex-direction: column; background: #f0f0f0; }
.addr { height: 37px; background: #fff; display: flex; align-items: center; padding: 0 11px 1px 10px; }
.fwd { margin-left: 9px; }
.mini { margin-left: 10px; }
.uparrow { margin: 0 6px 0 14px; }
.path { width: 277px; height: 24px; border: 1px solid #7d7d7d; display: flex; align-items: center; padding: 0 6px 0 3px; }
.path span[data-w] { margin: -1px 0 0 4px; }
.crumb { margin-left: 12px; }
.refresh { margin-left: 11px; }
.search { width: 204px; height: 23px; margin-left: 10px; border: 1px solid #7d7d7d; display: flex; align-items: center; justify-content: space-between; padding: 0 8px 0 9px; color: #6d6d6d; }
.tools { height: 31px; background: #efefef; display: flex; align-items: center; padding: 0 16px 1px 14px; }
.t1 { margin: 0 22px 0 8px; }
.t2 { margin: 0 16px 0 13px; }
.files { height: 230px; flex: none; background: #fff; display: flex; overflow: hidden; }
.tree { width: 140px; padding-top: 9px; overflow: hidden; }
.tree div { height: 21px; padding-left: 30px; display: flex; align-items: center; gap: 5px; }
.tree .top { padding-left: 20px; }
.tree svg, .list li svg { width: 16px; height: 16px; }
.vscroll { width: 17px; display: flex; flex-direction: column; border: 1px solid #b8b8b8; }
.btn { display: flex; align-items: center; justify-content: center; width: 15px; height: 16px; }
.flip { transform: rotate(180deg); }
.left { transform: rotate(90deg); }
.rgt { transform: rotate(-90deg); }
.vthumb { height: 93px; margin: 0 -1px; background: #dcdcdc; border: 1px solid #9c9c9c; display: flex; align-items: center; justify-content: center; }
.list { flex: 1; min-width: 0; margin-left: 3px; display: flex; flex-direction: column; justify-content: space-between; }
.cols { display: flex; overflow: hidden; padding: 5px 0 0 18px; }
.cols ul { width: 189px; flex: none; margin: 0; padding: 0; list-style: none; }
.cols ul + ul { width: 241px; overflow: hidden; }
.list li { height: 21px; display: flex; align-items: center; gap: 2px; }
.list .faded { opacity: .5; }
.hscroll { height: 17px; display: flex; border: 1px solid #b8b8b8; }
.hthumb { width: 39px; margin: -1px 0; background: #dcdcdc; border: 1px solid #9c9c9c; display: flex; align-items: center; justify-content: center; }
.last { border-left: 1px solid #b8b8b8; }
.bottom { flex: 1; padding: 10px 5px 0 11px; position: relative; }
.field { display: flex; align-items: center; margin-bottom: 1px; height: 24px; }
.lbl { width: 109px; text-align: right; }
.combo { width: 479px; height: 23px; margin-left: 5px; background: #fff; border: 1px solid #707070; display: flex; align-items: center; justify-content: space-between; padding: 0 3px; }
.focus { border-color: #2a5f8c; padding-left: 5px; }
.combo mark { margin-top: -2px; background: #3498fd; color: #fff; line-height: 15px; }
.actions { display: flex; align-items: center; margin-top: 20px; padding-right: 13px; height: 26px; }
.actions > span[data-w] { margin: 6px 0 0 5px; }
.actions > svg { margin-top: 4px; }
button { width: 86px; height: 24px; margin-left: 14px; padding: 0; background: #dedede; border: 1px solid #707070; font: inherit; color: #000; display: flex; align-items: center; justify-content: center; }
button.save { border-color: #3a7ab0; }
.grip { position: absolute; right: 2px; bottom: 1px; }
```

FILE: script.js
```js
// Adjust tracking so each label occupies its declared width.
document.querySelectorAll('[data-w]').forEach(function (el) {
  var range = document.createRange();
  range.selectNodeContents(el);
  var width = range.getBoundingClientRect().width;
  el.style.letterSpacing = ((+el.dataset.w - width) / el.textContent.length) + 'px';
});

// Payment code: 45 x 45 modules with finder and alignment marks.
(function () {
  var n = 45, seed = 20220225, grid = [], d = '', x, y;
  for (y = 0; y < n; y++) {
    grid.push([]);
    for (x = 0; x < n; x++) {
      seed = (seed * 1103515 + 12345) % 2147483648;
      grid[y].push(seed / 2147483648 < 0.57);
    }
  }
  function mark(cx, cy, r) {
    for (var j = -r; j <= r; j++) for (var i = -r; i <= r; i++) {
      var k = Math.max(Math.abs(i), Math.abs(j));
      if (grid[cy + j] && cx + i >= 0 && cx + i < n) grid[cy + j][cx + i] = r === 4 ? k !== 2 && k !== 4 : k !== 1;
    }
  }
  [[22, 6], [6, 22], [22, 22], [38, 22], [22, 38], [38, 38]].forEach(function (p) { mark(p[0], p[1], 2); });
  [[3, 3], [41, 3], [3, 41]].forEach(function (p) { mark(p[0], p[1], 4); });
  for (y = 0; y < n; y++) for (x = 0; x < n; x++) if (grid[y][x]) d += 'M' + x + ' ' + y + 'h1v1h-1z';
  document.querySelector('#qr path').setAttribute('d', d);
})();
```
